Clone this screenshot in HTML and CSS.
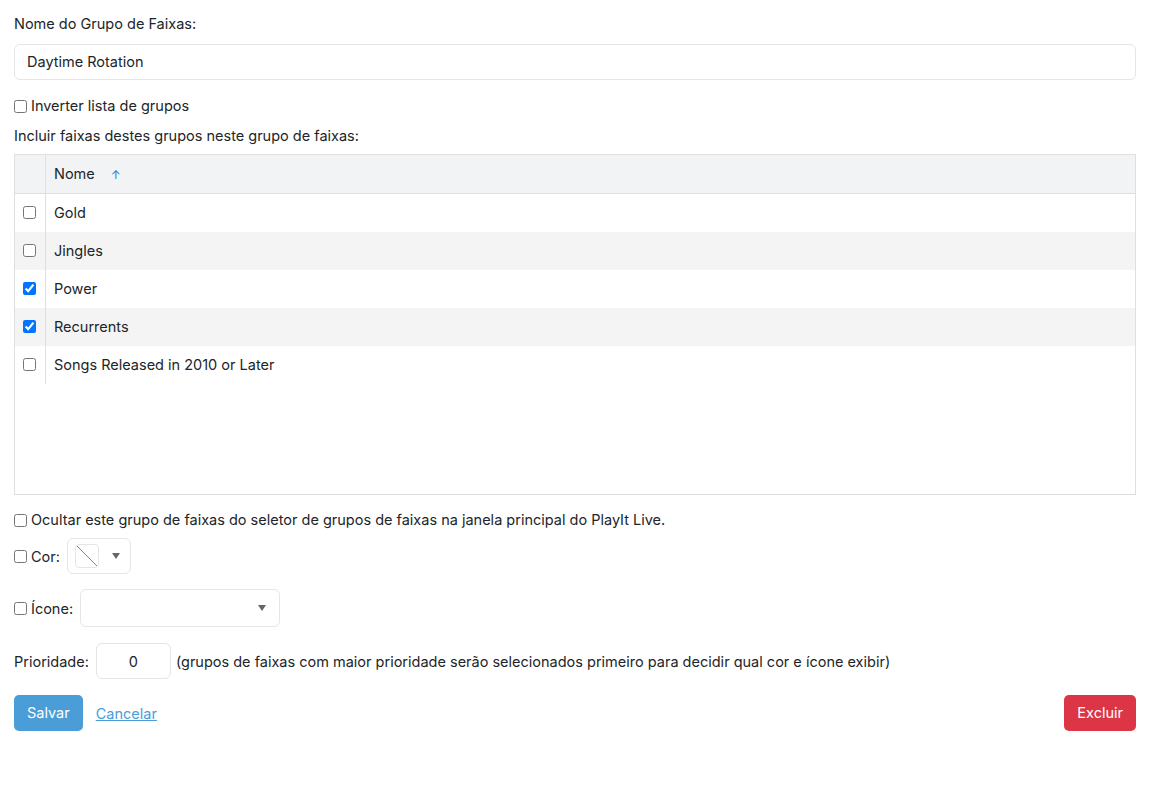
FILE: index.html
```html
<!DOCTYPE html>
<html lang="pt">
<head>
  <meta charset="UTF-8">
  <title>Grupo de Faixas</title>
  <link rel="stylesheet" href="styles.css">
</head>
<body>
  <div class="field">
    <label class="field-label" for="groupName">Nome do Grupo de Faixas:</label>
    <input type="text" id="groupName" class="text-input" value="Daytime Rotation">
  </div>

  <label class="check-line"><input type="checkbox"> Inverter lista de grupos</label>

  <p class="section-label">Incluir faixas destes grupos neste grupo de faixas:</p>

  <div class="grid-box">
    <table class="grid">
      <thead>
        <tr>
          <th class="col-check"></th>
          <th>Nome <span class="sort-arrow">&#8593;</span></th>
        </tr>
      </thead>
      <tbody>
        <tr><td class="col-check"><input type="checkbox"></td><td>Gold</td></tr>
        <tr><td class="col-check"><input type="checkbox"></td><td>Jingles</td></tr>
        <tr><td class="col-check"><input type="checkbox" checked></td><td>Power</td></tr>
        <tr><td class="col-check"><input type="checkbox" checked></td><td>Recurrents</td></tr>
        <tr><td class="col-check"><input type="checkbox"></td><td>Songs Released in 2010 or Later</td></tr>
      </tbody>
    </table>
  </div>

  <label class="check-line hide-line"><input type="checkbox"> Ocultar este grupo de faixas do seletor de grupos de faixas na janela principal do PlayIt Live.</label>

  <div class="inline-row color-row">
    <label class="check-inline"><input type="checkbox"> Cor:</label>
    <div class="color-picker">
      <span class="swatch">
        <svg width="22" height="22" viewBox="0 0 22 22"><line x1="1" y1="1" x2="21" y2="21" stroke="#e06060" stroke-width="1"/></svg>
      </span>
      <span class="caret"></span>
    </div>
  </div>

  <div class="inline-row icon-row">
    <label class="check-inline"><input type="checkbox"> Ícone:</label>
    <div class="icon-select"><span class="caret"></span></div>
  </div>

  <div class="inline-row priority-row">
    <label for="priority">Prioridade:</label>
    <input type="text" id="priority" class="priority-input" value="0">
    <span>(grupos de faixas com maior prioridade serão selecionados primeiro para decidir qual cor e ícone exibir)</span>
  </div>

  <div class="actions">
    <button class="btn btn-save">Salvar</button>
    <a href="#" class="cancel-link">Cancelar</a>
    <button class="btn btn-delete">Excluir</button>
  </div>
</body>
</html>
```

FILE: styles.css
```css
body {
  font-family: Inter, "Noto Sans", sans-serif;
  font-size: 14.5px;
  color: #212529;
  background: #fff;
  margin: 0;
  padding: 14px 14px;
}
.field-label {
  display: block;
  line-height: 20px;
  margin-bottom: 10px;
}
.text-input {
  display: block;
  width: 100%;
  box-sizing: border-box;
  height: 36px;
  padding: 0 12px 1px;
  border: 1px solid #e3e5e8;
  border-radius: 6px;
  font-family: inherit;
  font-size: 14.5px;
  color: #212529;
}
.check-line {
  display: flex;
  align-items: center;
  line-height: 20px;
}
.check-line input,
.check-inline input {
  width: 13px;
  height: 13px;
  margin: 0 4px 0 0;
}
.field + .check-line {
  margin-top: 16px;
}
.section-label {
  margin: 10px 0 8px;
  line-height: 20px;
}
.grid-box {
  height: 339px;
  border: 1px solid #dedfe1;
}
.grid {
  width: 100%;
  border-collapse: collapse;
}
.grid th {
  background: #f2f3f5;
  font-weight: normal;
  text-align: left;
  height: 36px;
  padding: 0 8px 2px;
  border-bottom: 1px solid #dedfe1;
}
.grid td {
  height: 37px;
  padding: 0 8px 1px;
}
.grid tbody tr:nth-child(even) td {
  background: #f4f4f4;
}
.grid .col-check {
  width: 14px;
  border-right: 1px solid #dedfe1;
}
.grid td.col-check input {
  display: block;
  margin: 0;
  width: 13px;
  height: 13px;
}
.sort-arrow {
  color: #2c7be5;
  font-size: 12px;
  margin-left: 12px;
}
.hide-line {
  margin-top: 15px;
}
.inline-row {
  display: flex;
  align-items: center;
}
.check-inline {
  display: flex;
  align-items: center;
  margin-right: 7px;
}
.color-row {
  margin-top: 8px;
}
.color-picker {
  width: 64px;
  height: 36px;
  box-sizing: border-box;
  border: 1px solid #e3e5e8;
  border-radius: 6px;
  display: flex;
  align-items: center;
  padding: 0 7px;
}
.swatch {
  width: 22px;
  height: 22px;
  border: 1px solid #e3e5e8;
  border-radius: 4px;
  overflow: hidden;
  display: block;
}
.swatch svg {
  display: block;
}
.caret {
  width: 0;
  height: 0;
  border-left: 4px solid transparent;
  border-right: 4px solid transparent;
  border-top: 6px solid #666;
  margin-left: auto;
  margin-right: 3px;
}
.icon-row {
  margin-top: 15px;
}
.icon-select {
  width: 200px;
  height: 38px;
  box-sizing: border-box;
  border: 1px solid #e3e5e8;
  border-radius: 6px;
  display: flex;
  align-items: center;
  padding: 0 10px;
}
.priority-row {
  margin-top: 16px;
}
.priority-input {
  width: 75px;
  height: 36px;
  box-sizing: border-box;
  margin: 0 5px 0 7px;
  border: 1px solid #e3e5e8;
  border-radius: 6px;
  text-align: center;
  font-family: inherit;
  font-size: 14.5px;
  color: #212529;
}
.actions {
  display: flex;
  align-items: center;
  margin-top: 16px;
}
.btn {
  height: 36px;
  padding: 0 13px 1px;
  border: none;
  border-radius: 5px;
  color: #fff;
  font-family: inherit;
  font-size: 14.5px;
  cursor: pointer;
}
.btn-save {
  background: #4a9dd6;
}
.cancel-link {
  color: #4a9dd6;
  margin-left: 13px;
  font-size: 14.5px;
}
.btn-delete {
  background: #dc3545;
  margin-left: auto;
}
```
